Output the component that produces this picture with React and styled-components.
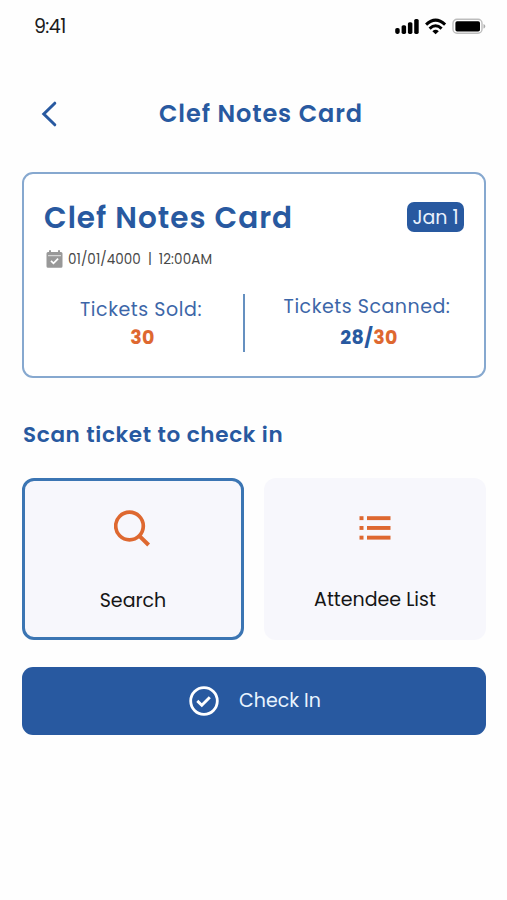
import React from "react";
import styled, { createGlobalStyle } from "styled-components";

const BLUE = "#2859a0";
const ORANGE = "#de6830";

export default function App() {
    return <Screen>
        <GlobalStyle/>
        <StatusBar>
            <Time>9:41</Time>
            <StatusIcons/>
        </StatusBar>

        <Header>
            <BackButton aria-label="Back">
                <svg width="16" height="26" viewBox="0 0 16 26" fill="none">
                    <path d="M13.8 2.2L2.8 13L13.8 23.8" stroke={BLUE} strokeWidth="3" strokeLinecap="round"/>
                </svg>
            </BackButton>
            <PageTitle>Clef Notes Card</PageTitle>
        </Header>

        <EventCard>
            <CardHead>
                <EventName>Clef Notes Card</EventName>
                <DateBadge>Jan 1</DateBadge>
            </CardHead>
            <DateRow>
                <CalendarIcon/>
                <DateText ls={0.05}>01/01/4000</DateText>
                <Bar>|</Bar>
                <DateText ls={0.1}>12:00AM</DateText>
            </DateRow>
            <Stats>
                <Stat w={194} pt={4}>
                    <StatLabel ls={0.55}>Tickets Sold:</StatLabel>
                    <StatValue mt={0} indent={3}><Orange>30</Orange></StatValue>
                </Stat>
                <Divider/>
                <Stat w={190} pt={1} ml={27}>
                    <StatLabel ls={0.52}>Tickets Scanned:</StatLabel>
                    <StatValue mt={3} indent={4}>28/<Orange>30</Orange></StatValue>
                </Stat>
            </Stats>
        </EventCard>

        <SectionTitle>Scan ticket to check in</SectionTitle>

        <Options>
            <Option selected>
                <SearchIcon/>
                <OptionLabel mt={40}>Search</OptionLabel>
            </Option>
            <Option>
                <ListIcon/>
                <OptionLabel mt={39}>Attendee List</OptionLabel>
            </Option>
        </Options>

        <CheckInButton>
            <CheckIcon/>
            <span>Check In</span>
        </CheckInButton>
    </Screen>
}

const StatusIcons = () => (
    <svg width="94" height="20" viewBox="0 0 94 20" fill="none">
        <g fill="#000">
            <rect x="3.2" y="12" width="4.5" height="5.9" rx="1.8"/>
            <rect x="9.6" y="9.2" width="4.5" height="8.7" rx="1.6"/>
            <rect x="15.9" y="6.2" width="4.5" height="11.7" rx="1.6"/>
            <rect x="22.2" y="3" width="4.5" height="14.9" rx="1.6"/>
        </g>
        <g stroke="#000" strokeWidth="3">
            <path d="M34.1 8.6Q43.6 -0.5 53.1 8.6"/>
            <path d="M37.6 12.6Q43.6 6.9 49.6 12.6"/>
        </g>
        <path d="M40.4 15.2Q43.6 12.4 46.8 15.2L43.6 18.2Z" fill="#000"/>
        <rect x="61" y="3.3" width="29" height="14" rx="4" stroke="#bdbdbd" strokeWidth="1.4"/>
        <rect x="63.4" y="5.3" width="24.6" height="10.2" rx="1.8" fill="#000"/>
        <path d="M91.5 8v4.6c2.4-1 2.4-3.6 0-4.6Z" fill="#aaa"/>
    </svg>
)

const CalendarIcon = () => (
    <svg width="17" height="18" viewBox="0 0 17 18">
        <path d="M2 2H3V0.3H5V2H12V0.3H14V2H15A1.5 1.5 0 0 1 16.5 3.5V16.2A1.5 1.5 0 0 1 15 17.7H2A1.5 1.5 0 0 1 0.5 16.2V3.5A1.5 1.5 0 0 1 2 2Z" fill="#989898"/>
        <path d="M2 5.7H15" stroke="#e3e3e3" strokeWidth="1"/>
        <path d="M5 10.8L7.5 13.3L12.1 8.7" stroke="#fff" strokeWidth="1.7" fill="none"/>
    </svg>
)

const SearchIcon = () => (
    <svg width="38" height="38" viewBox="0 0 38 38" fill="none" stroke={ORANGE}>
        <circle cx="15.5" cy="17" r="13.8" strokeWidth="3.7"/>
        <path d="M25.3 26.8L34.6 36" strokeWidth="4"/>
    </svg>
)

const ListIcon = () => (
    <svg width="32" height="38" viewBox="0 0 32 38" fill={ORANGE}>
        {[7.2, 17, 26.7].map(y => (
            <g key={y}>
                <rect x="0.5" y={y} width="4" height="3.9"/>
                <rect x="8" y={y} width="23.5" height="3.9"/>
            </g>
        ))}
    </svg>
)

const CheckIcon = () => (
    <svg width="30" height="30" viewBox="0 0 30 30" fill="none" stroke="#fff">
        <circle cx="15" cy="15" r="13.3" strokeWidth="2.8"/>
        <path d="M8.3 14.9L12.8 19.3L20.8 11.2" strokeWidth="2.9"/>
    </svg>
)

const GlobalStyle = createGlobalStyle`
    body {
        margin: 0;
        background-color: #fff;
    }

    * {
        box-sizing: border-box;
    }

    button {
        font-family: inherit;
        border: none;
        padding: 0;
    }
`

const Screen = styled.main`
    width: 507px;
    height: 900px;
    padding: 0 21px 0 22px;
    overflow: hidden;
    background-color: #fefefe;
    font-family: Poppins, Inter, "Open Sans", sans-serif;
    color: ${BLUE};
    white-space: nowrap;
`

const StatusBar = styled.div`
    display: flex;
    justify-content: space-between;
    align-items: center;
    height: 52px;
    padding-left: 12px;
`

const Time = styled.span`
    font-size: 19px;
    letter-spacing: -0.6px;
    color: #1b1b1b;
`

const Header = styled.header`
    display: grid;
    grid-template-columns: 40px 1fr 26px;
    align-items: center;
    height: 50px;
    margin-top: 37px;
`

const BackButton = styled.button`
    display: flex;
    padding: 0 0 0 19px;
    background: none;
`

const PageTitle = styled.h1`
    margin: 0;
    padding-bottom: 2px;
    text-align: center;
    font-size: 24px;
    font-weight: 600;
    letter-spacing: 0.9px;
`

const EventCard = styled.section`
    height: 206px;
    margin-top: 33px;
    padding: 27px 20px 0;
    border: solid 2px #86a8cf;
    border-radius: 11px;
    background-color: #fff;
`

const CardHead = styled.div`
    display: flex;
    justify-content: space-between;
    align-items: center;
    height: 32px;
`

const EventName = styled.h2`
    margin: 0;
    padding-top: 1px;
    font-size: 29.5px;
    font-weight: 600;
    letter-spacing: 1px;
`

const DateBadge = styled.span`
    display: flex;
    align-items: center;
    justify-content: center;
    width: 57px;
    height: 30px;
    border-radius: 7px;
    background-color: ${BLUE};
    color: #e8f1fd;
    font-size: 19px;
`

const DateRow = styled.div`
    display: flex;
    align-items: center;
    height: 20px;
    margin-top: 16px;
    padding-left: 2px;
    color: #484848;
    font-size: 13.5px;
`

const DateText = styled.span`
    margin-left: 5px;
    padding-top: 1px;
    letter-spacing: ${p => p.ls}px;
`

const Bar = styled.span`
    margin: 0 2px 0 7px;
`

const Stats = styled.div`
    display: flex;
    margin-top: 25px;
`

const Stat = styled.div`
    flex-shrink: 0;
    width: ${p => p.w}px;
    margin-left: ${p => p.ml || 0}px;
    padding-top: ${p => p.pt}px;
    text-align: center;
`

const StatLabel = styled.div`
    line-height: 24px;
    font-size: 19px;
    letter-spacing: ${p => p.ls}px;
    color: #3c66a8;
`

const StatValue = styled.div`
    margin-top: ${p => p.mt}px;
    padding-left: ${p => p.indent}px;
    line-height: 32px;
    font-size: 19px;
    font-weight: 700;
    letter-spacing: 0.4px;
`

const Orange = styled.span`
    color: ${ORANGE};
`

const Divider = styled.div`
    flex-shrink: 0;
    width: 2px;
    height: 58px;
    margin-left: 5px;
    background-color: #6590c0;
`

const SectionTitle = styled.h3`
    margin: 42px 0 0 1px;
    line-height: 30px;
    font-size: 21.5px;
    font-weight: 600;
    letter-spacing: 0.67px;
`

const Options = styled.div`
    display: grid;
    grid-template-columns: 222px 222px;
    gap: 20px;
    margin-top: 28px;
`

const Option = styled.button`
    display: flex;
    flex-direction: column;
    align-items: center;
    height: 162px;
    padding-top: ${p => p.selected ? 28 : 31}px;
    border: ${p => p.selected ? "solid 3px #3b75b3" : "none"};
    border-radius: 12px;
    background-color: #f7f7fc;
`

const OptionLabel = styled.span`
    margin-top: ${p => p.mt}px;
    line-height: 28px;
    font-size: 19px;
    color: #151515;
`

const CheckInButton = styled.button`
    display: flex;
    align-items: center;
    justify-content: center;
    gap: 20px;
    width: 464px;
    height: 68px;
    margin-top: 27px;
    padding: 0 0 1px 2px;
    border-radius: 11px;
    background-color: ${BLUE};
    color: #e8f4ff;
    font-size: 19px;
`
